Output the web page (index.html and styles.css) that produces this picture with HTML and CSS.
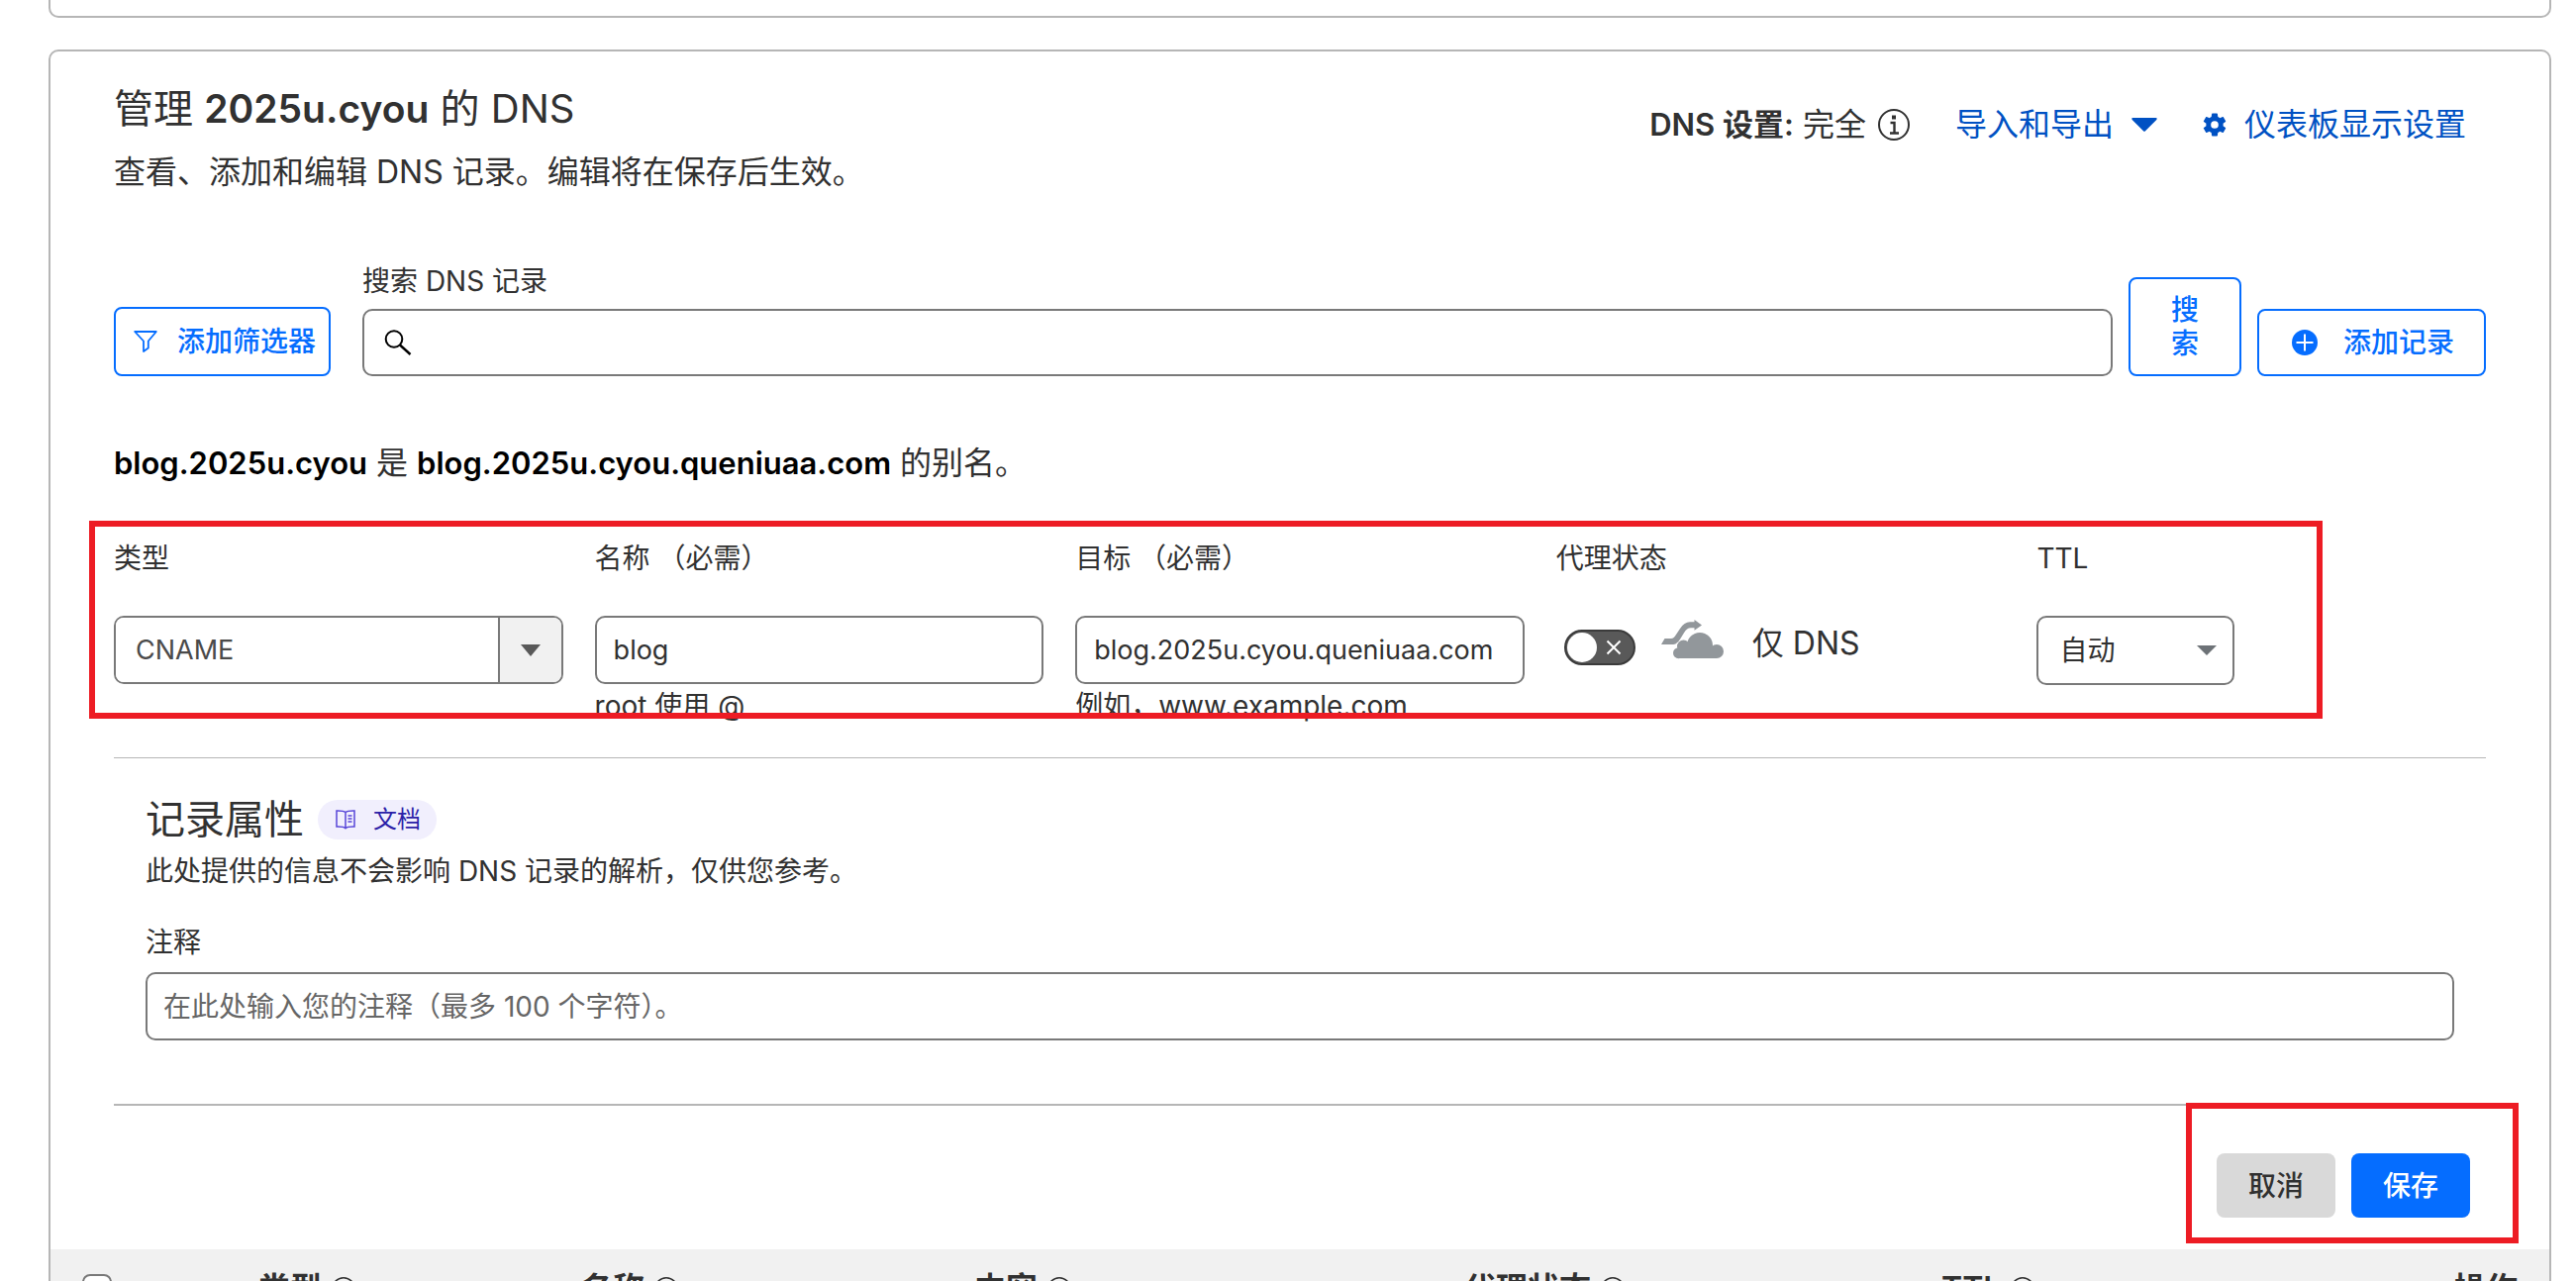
FILE: index.html
```html
<!DOCTYPE html>
<html lang="zh-CN">
<head>
<meta charset="utf-8">
<meta name="viewport" content="width=device-width, initial-scale=1">
<title>管理 2025u.cyou 的 DNS</title>
<link rel="stylesheet" href="styles.css">
</head>
<body>
<svg class="sprite" aria-hidden="true">
  <symbol id="i-info" viewBox="0 0 32 32"><circle cx="16" cy="16" r="15" fill="none" stroke="currentColor" stroke-width="2"/><path d="M12.500 14h4v10M12 24.500h9" fill="none" stroke="currentColor" stroke-width="2.400"/><path d="M14 6.500h4v4h-4z" fill="currentColor"/></symbol>
</svg>

<main class="page">
  <section class="card card-previous" aria-hidden="true"></section>

  <section class="card card-dns">
    <div class="content">
      <header class="head">
        <div>
          <h1 class="title">管理 <strong>2025u.cyou</strong> 的 DNS</h1>
          <p class="subtitle">查看、添加和编辑 DNS 记录。编辑将在保存后生效。</p>
        </div>
        <div class="head-actions">
          <span class="setup"><span><strong>DNS 设置:</strong> 完全</span>
            <svg class="icon-info"><use href="#i-info"/></svg></span>
          <a class="link" href="#import">导入和导出
            <svg class="icon-caret" viewBox="0 0 26 14"><path d="M1.500 0h23q2 0 .8 2L14 13.200q-1 1.200-2 0L.7 2Q-.5 0 1.500 0z" fill="currentColor"/></svg></a>
          <a class="link" href="#display">
            <svg class="icon-gear" viewBox="2 2 20 20"><path fill="currentColor" d="M19.140 12.940c.04-.3.06-.61.06-.94 0-.32-.02-.64-.07-.94l2.030-1.580c.18-.14.23-.41.12-.61l-1.920-3.320c-.12-.22-.37-.29-.59-.22l-2.390.96c-.5-.38-1.030-.7-1.620-.94l-.36-2.540c-.04-.24-.24-.41-.48-.41h-3.840c-.24 0-.43.17-.47.41l-.36 2.540c-.59.24-1.130.57-1.620.94l-2.390-.96c-.22-.08-.47 0-.59.22L2.740 8.870c-.12.21-.08.47.12.61l2.030 1.580c-.05.3-.09.63-.09.94s.02.64.07.94l-2.030 1.580c-.18.14-.23.41-.12.61l1.920 3.320c.12.22.37.29.59.22l2.390-.96c.5.38 1.030.7 1.620.94l.36 2.540c.05.24.24.41.48.41h3.840c.24 0 .44-.17.47-.41l.36-2.540c.59-.24 1.130-.56 1.620-.94l2.390.96c.22.08.47 0 .59-.22l1.920-3.320c.12-.22.07-.47-.12-.61l-2.010-1.580zM12 15.200a3.200 3.200 0 1 1 0-6.400 3.200 3.200 0 0 1 0 6.400z"/></svg>
            仪表板显示设置</a>
        </div>
      </header>

      <form class="search-row">
        <button class="btn btn-outline btn-filter" type="button">
          <svg class="icon-filter" viewBox="0 0 24 22"><path d="M1.200 1h21.600l-8 9.500v7L10 21V10.500z" fill="none" stroke="currentColor" stroke-width="1.800" stroke-linejoin="round"/></svg>
          添加筛选器</button>
        <div class="search-field">
          <label for="search">搜索 DNS 记录</label>
          <div class="search-box">
            <svg class="icon-search" viewBox="0 0 28 26"><circle cx="10" cy="9.500" r="8.300" fill="none" stroke="#000" stroke-width="2"/><path d="M16 15.500 26.500 25" stroke="#000" stroke-width="2.400"/></svg>
            <input id="search" type="text">
          </div>
        </div>
        <button class="btn btn-outline btn-search" type="button">搜索</button>
        <button class="btn btn-outline btn-add" type="button">
          <svg class="icon-plus" viewBox="0 0 26 26"><circle cx="13" cy="13" r="13" fill="currentColor"/><path d="M13 4.500v17M4.500 13h17" stroke="#fff" stroke-width="2"/></svg>
          添加记录</button>
      </form>

      <p class="alias"><strong>blog.2025u.cyou</strong> 是 <strong>blog.2025u.cyou.queniuaa.com</strong> 的别名。</p>

      <form class="record">
        <div class="field">
          <label for="type">类型</label>
          <div class="combo">
            <input id="type" type="text" value="CNAME">
            <button type="button" aria-label="类型"><svg viewBox="0 0 20 12"><path d="M0 0h20L10 12z" fill="currentColor"/></svg></button>
          </div>
        </div>
        <div class="field">
          <label for="name">名称 （必需）</label>
          <input class="box" id="name" type="text" value="blog">
          <p class="hint">root 使用 @</p>
        </div>
        <div class="field">
          <label for="target">目标 （必需）</label>
          <input class="box" id="target" type="text" value="blog.2025u.cyou.queniuaa.com">
          <p class="hint">例如，www.example.com</p>
        </div>
        <div class="field">
          <label for="proxy">代理状态</label>
          <div class="proxy">
            <span class="toggle"><input id="proxy" type="checkbox">
              <svg viewBox="0 0 16 16"><path d="M1.500 1.500l13 13M14.500 1.500l-13 13" stroke="#fff" stroke-width="2"/></svg></span>
            <svg class="icon-cloud" viewBox="0 0 64 40"><g fill="#92979b"><circle cx="39" cy="26" r="13"/><circle cx="22.500" cy="27" r="6.500"/><circle cx="17.500" cy="33.700" r="5.500"/><circle cx="56" cy="32" r="7"/><path d="M17 28h39v11H17z"/><path d="M0 25 3.500 19H10c2 0 3.500-1.500 5-4l4-6c3-4.500 6-6.800 10-6.800h4.500V0L41 5.500l-7.500 5.200V8.200H30c-3 0-5 1.800-7 5l-4 6.500C16.500 23.500 14.500 25 11 25z"/></g></svg>
            <span class="proxy-text">仅 DNS</span>
          </div>
        </div>
        <div class="field">
          <label for="ttl">TTL</label>
          <div class="select">
            <select id="ttl"><option>自动</option></select>
            <svg viewBox="0 0 20 10"><path d="M0 0h20L10 10z" fill="#6d7277"/></svg>
          </div>
        </div>
      </form>

      <section class="attributes">
        <div class="attributes-head">
          <h2>记录属性</h2>
          <a class="badge" href="#docs">
            <svg viewBox="0 0 20 20"><path d="M10 2.500C8.500 1.200 5 .9 1 1v16c4-.1 7.500.2 9 1.700 1.500-1.500 5-1.800 9-1.700V1c-4-.1-7.500.2-9 1.500zm0 0v16" fill="none" stroke="currentColor" stroke-width="1.500"/><path d="M12.500 6h4M12.500 9h4M12.500 12h4" stroke="currentColor" stroke-width="1.500"/></svg>
            文档</a>
        </div>
        <p class="attributes-text">此处提供的信息不会影响 DNS 记录的解析，仅供您参考。</p>
        <label class="comment-label" for="comment">注释</label>
        <input class="box comment" id="comment" type="text" placeholder="在此处输入您的注释（最多 100 个字符）。">
      </section>

      <footer class="footer">
        <button class="btn btn-cancel" type="button">取消</button>
        <button class="btn btn-save" type="button">保存</button>
      </footer>
    </div>

    <table class="records">
      <colgroup><col class="c-check"><col class="c-type"><col class="c-name"><col class="c-content"><col class="c-proxy"><col class="c-ttl"><col></colgroup>
      <thead>
        <tr>
          <th><input type="checkbox" aria-label="全选"></th>
          <th><span>类型 <svg><use href="#i-info"/></svg></span></th>
          <th><span>名称 <svg><use href="#i-info"/></svg></span></th>
          <th><span>内容 <svg><use href="#i-info"/></svg></span></th>
          <th><span>代理状态 <svg><use href="#i-info"/></svg></span></th>
          <th><span>TTL <svg><use href="#i-info"/></svg></span></th>
          <th class="last">操作</th>
        </tr>
      </thead>
    </table>
  </section>
</main>
</body>
</html>
```
FILE: styles.css
```css
*, *::before, *::after { box-sizing: border-box; }

html { overflow: hidden; }

body {
  margin: 0;
  height: 100vh;
  overflow: hidden;
  background: #fff;
  color: #313131;
  font-family: Inter, "Noto Sans CJK SC", sans-serif;
  font-size: 28px;
  line-height: 36px;
}

h1, h2, p { margin: 0; font-weight: 400; }
strong { font-weight: 600; }
button, input, select { font: inherit; color: inherit; margin: 0; }
svg { display: block; flex: none; }
.sprite { position: absolute; width: 0; height: 0; }

.page { padding: 0 25px 0 49px; }

.card { border: 2px solid #b6b6b6; border-radius: 10px; }
.card-previous { height: 18px; border-top: 0; border-radius: 0 0 10px 10px; }
.card-dns { margin-top: 32px; }
.content { padding: 34px 64px 32px; }

/* Heading */
.head { display: flex; justify-content: space-between; }
.title { font-size: 40px; line-height: 48px; }
.title strong { font-size: 39px; }
.subtitle { margin-top: 16px; font-size: 32px; line-height: 48px; }
.head-actions {
  display: flex;
  align-items: center;
  gap: 46px;
  height: 48px;
  margin-top: 16px;
  padding-right: 20px;
  font-size: 32px;
}
.setup { display: flex; align-items: center; gap: 12px; }
.setup strong { font-size: 31px; }
.icon-info { width: 32px; height: 32px; }
.link { display: flex; align-items: center; gap: 18px; color: #0051c3; text-decoration: none; }
.icon-caret { width: 26px; height: 14px; }
.icon-gear { width: 24px; height: 24px; }

/* Search */
.search-row { display: flex; align-items: flex-end; margin-top: 68px; }
.btn {
  display: flex;
  align-items: center;
  justify-content: center;
  border: 0;
  border-radius: 8px;
  font-weight: 500;
  line-height: 34px;
}
.btn-outline { border: 2px solid #056dff; background: #fff; color: #056dff; }
.btn-filter { height: 70px; padding: 0 13px 0 18px; gap: 20px; margin-right: 32px; }
.icon-filter { width: 24px; height: 22px; }
.search-field { flex: 1; }
.search-field label { display: block; margin-bottom: 10px; }
.search-box {
  display: flex;
  align-items: center;
  height: 68px;
  padding-left: 20px;
  border: 2px solid #797979;
  border-radius: 10px;
}
.icon-search { width: 28px; height: 26px; }
.search-box input { flex: 1; min-width: 0; padding: 0 12px; border: 0; outline: 0; background: none; }
.btn-search { width: 114px; height: 100px; margin: 0 16px; padding: 0 40px; }
.btn-add { height: 68px; padding: 0 30px 0 33px; gap: 26px; }
.icon-plus { width: 26px; height: 26px; }

.alias { margin-top: 64px; font-size: 32px; line-height: 48px; }
.alias strong { color: #000; font-size: 31px; }

/* Record form */
.record {
  position: relative;
  display: grid;
  grid-template-columns: repeat(5, minmax(0, 1fr));
  gap: 32px;
  margin-top: 54px;
  padding-bottom: 34px;
  border-bottom: 1px solid #b6b6b6;
}
.record::after {
  content: "";
  position: absolute;
  top: -20px;
  right: 165px;
  bottom: 39px;
  left: -25px;
  border: 6px solid #ed1c24;
  pointer-events: none;
}
.field > label { display: block; margin-bottom: 40px; }
.field input { font-size: 27px; }
.box {
  display: block;
  width: 100%;
  height: 69px;
  padding: 0 17px;
  border: 2px solid #797979;
  border-radius: 10px;
  background: #fff;
  outline: 0;
}
.hint { margin-top: 4px; }
.combo { display: flex; height: 69px; border: 2px solid #797979; border-radius: 10px; overflow: hidden; }
.combo input { flex: 1; min-width: 0; padding: 0 20px; border: 0; outline: 0; color: #4a4a4a; }
.combo button {
  display: flex;
  align-items: center;
  justify-content: center;
  width: 64px;
  padding: 0;
  border: 0;
  border-left: 2px solid #797979;
  background: #f1f1f1;
  color: #595959;
}
.combo svg { width: 20px; height: 12px; }

.proxy { display: flex; align-items: center; height: 60px; padding-left: 8px; }
.toggle { position: relative; display: flex; margin-top: 4px; }
.toggle input {
  appearance: none;
  width: 72px;
  height: 36px;
  border: 2px solid #3b3b3b;
  border-radius: 18px;
  background: #595959;
}
.toggle input::before {
  content: "";
  display: block;
  width: 30px;
  height: 30px;
  margin: 1px;
  border-radius: 50%;
  background: #fff;
}
.toggle svg { position: absolute; top: 10px; right: 14px; width: 16px; height: 16px; }
.icon-cloud { width: 64px; height: 40px; margin: 0 28px 12px 26px; }
.proxy-text { margin-bottom: 4px; font-size: 32px; }

.select { position: relative; width: 200px; }
.select select {
  appearance: none;
  display: block;
  width: 100%;
  height: 70px;
  padding: 0 21px;
  border: 2px solid #797979;
  border-radius: 10px;
  background: #fff;
}
.select svg { position: absolute; top: 30px; right: 18px; width: 20px; height: 10px; }

/* Record attributes */
.attributes { padding: 36px 32px 64px; border-bottom: 2px solid #b6b6b6; }
.attributes-head { display: flex; align-items: center; gap: 14px; }
.attributes-head h2 { font-size: 40px; line-height: 52px; }
.badge {
  display: flex;
  align-items: center;
  gap: 18px;
  height: 40px;
  padding: 0 16px 0 18px;
  border-radius: 20px;
  background: #f1effd;
  color: #2c1fa8;
  font-size: 24px;
  text-decoration: none;
}
.badge svg { width: 20px; height: 20px; color: #5746d8; }
.attributes-text { margin-top: 8px; }
.comment-label { display: block; margin: 36px 0 12px; }
.comment { padding: 0 16px; }
.comment::placeholder { color: #666; opacity: 1; }

.footer { position: relative; display: flex; justify-content: flex-end; gap: 16px; padding: 48px 16px 0; }
.footer::after {
  content: "";
  position: absolute;
  top: -3px;
  right: -33px;
  bottom: -26px;
  width: 336px;
  border: 6px solid #ed1c24;
  pointer-events: none;
}
.footer .btn { width: 120px; height: 65px; }
.btn-cancel { background: #d9d9d9; color: #313131; }
.btn-save { background: #056dff; color: #fff; }

/* Records table */
.records { width: 100%; table-layout: fixed; border-collapse: collapse; background: #f1f1f1; }
.records th { padding: 20px 0 20px 32px; text-align: left; font-size: 32px; font-weight: 600; line-height: 40px; }
.records th span { display: flex; align-items: center; gap: 10px; }
.records th svg { width: 24px; height: 24px; }
.records .last { padding-right: 32px; text-align: right; }
.records input {
  appearance: none;
  display: block;
  width: 30px;
  height: 30px;
  border: 2px solid #797979;
  border-radius: 8px;
  background: #fff;
}
.c-check { width: 178px; }
.c-type { width: 326px; }
.c-name { width: 397px; }
.c-content { width: 495px; }
.c-proxy { width: 482px; }
.c-ttl { width: 400px; }
```
